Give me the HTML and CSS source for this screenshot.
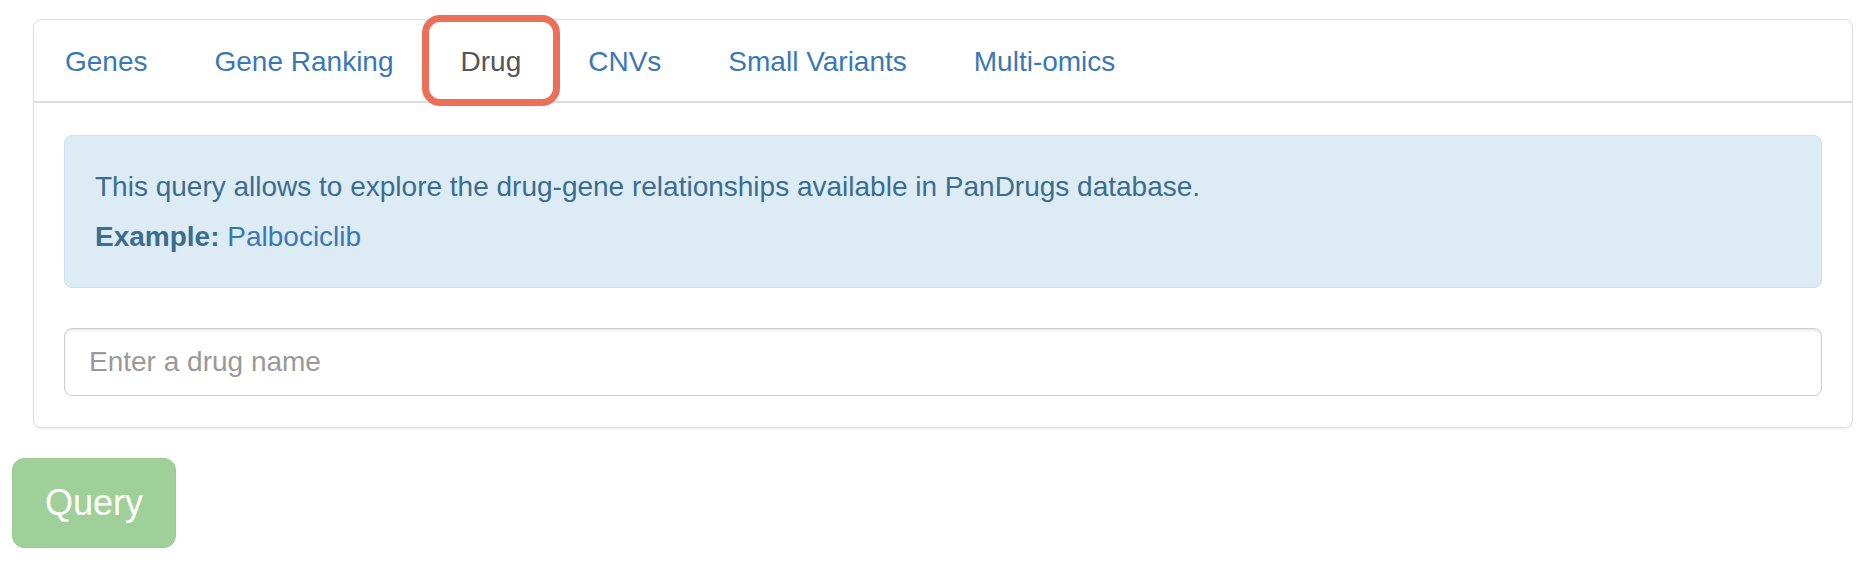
FILE: index.html
```html
<!DOCTYPE html>
<html lang="en">
<head>
<meta charset="utf-8">
<title>PanDrugs query</title>
<link rel="stylesheet" href="styles.css">
</head>
<body>
<div class="page">
  <div class="panel">
    <ul class="tabs">
      <li class="tab"><a href="#">Genes</a></li>
      <li class="tab"><a href="#">Gene Ranking</a></li>
      <li class="tab active"><a href="#">Drug</a></li>
      <li class="tab"><a href="#">CNVs</a></li>
      <li class="tab"><a href="#">Small Variants</a></li>
      <li class="tab"><a href="#">Multi-omics</a></li>
    </ul>
    <div class="panel-body">
      <div class="alert">
        <p class="alert-line first">This query allows to explore the drug-gene relationships available in PanDrugs database.</p>
        <p class="alert-line"><strong>Example:</strong> <a href="#" class="example-link">Palbociclib</a></p>
      </div>
      <input class="field" type="text" placeholder="Enter a drug name">
    </div>
  </div>
  <button class="btn-query" type="button" disabled>Query</button>
</div>
</body>
</html>
```

FILE: styles.css
```css
html, body {
  margin: 0;
  padding: 0;
  background: #ffffff;
}

body {
  font-family: "Liberation Sans", Arial, sans-serif;
  font-size: 28px;
  color: #333333;
}

.page {
  padding: 19px 13px 0 12px;
}

.panel {
  margin-left: 21px;
  background: #ffffff;
  border: 1px solid #dddddd;
  border-radius: 8px;
  box-shadow: 0 2px 2px rgba(0, 0, 0, 0.05);
}

.tabs {
  display: flex;
  gap: 7px;
  list-style: none;
  margin: 0;
  padding: 0 0 0 1px;
  border-bottom: 2px solid #dddddd;
}

.tab a {
  position: relative;
  display: block;
  padding: 22px 30px 19px;
  line-height: 40px;
  color: #3a78b5;
  text-decoration: none;
}

.tab.active a {
  color: #555555;
}

.tab.active a::after {
  content: "";
  position: absolute;
  top: -5px;
  bottom: -5px;
  left: -9px;
  right: -9px;
  border: 7px solid #ec6f58;
  border-radius: 18px;
}

.panel-body {
  padding: 32px 30px 31px 30px;
}

.alert {
  background: #ddebf5;
  border: 1px solid #c4e3ee;
  border-radius: 8px;
  padding: 31px 30px 30px;
  margin-bottom: 40px;
  color: #3b6e8e;
}

.alert-line {
  margin: 0;
  line-height: 40px;
}

.alert-line.first {
  margin-bottom: 10px;
}

.alert strong {
  font-weight: bold;
  color: #3b6e8e;
}

.example-link {
  color: #3a78b5;
  text-decoration: none;
}

.field {
  display: block;
  box-sizing: border-box;
  width: 100%;
  height: 68px;
  padding: 0 24px;
  font-family: "Liberation Sans", Arial, sans-serif;
  font-size: 28px;
  color: #555555;
  background: #ffffff;
  border: 1px solid #cccccc;
  border-radius: 8px;
  box-shadow: inset 0 2px 2px rgba(0, 0, 0, 0.075);
  outline: none;
}

.field::placeholder {
  color: #999999;
}

.btn-query {
  display: block;
  margin-top: 30px;
  padding: 20px 32px;
  font-family: "Liberation Sans", Arial, sans-serif;
  font-size: 36px;
  line-height: 48px;
  color: #ffffff;
  background: #a0d09a;
  border: 1px solid #9bcd95;
  border-radius: 12px;
  cursor: not-allowed;
}
```
